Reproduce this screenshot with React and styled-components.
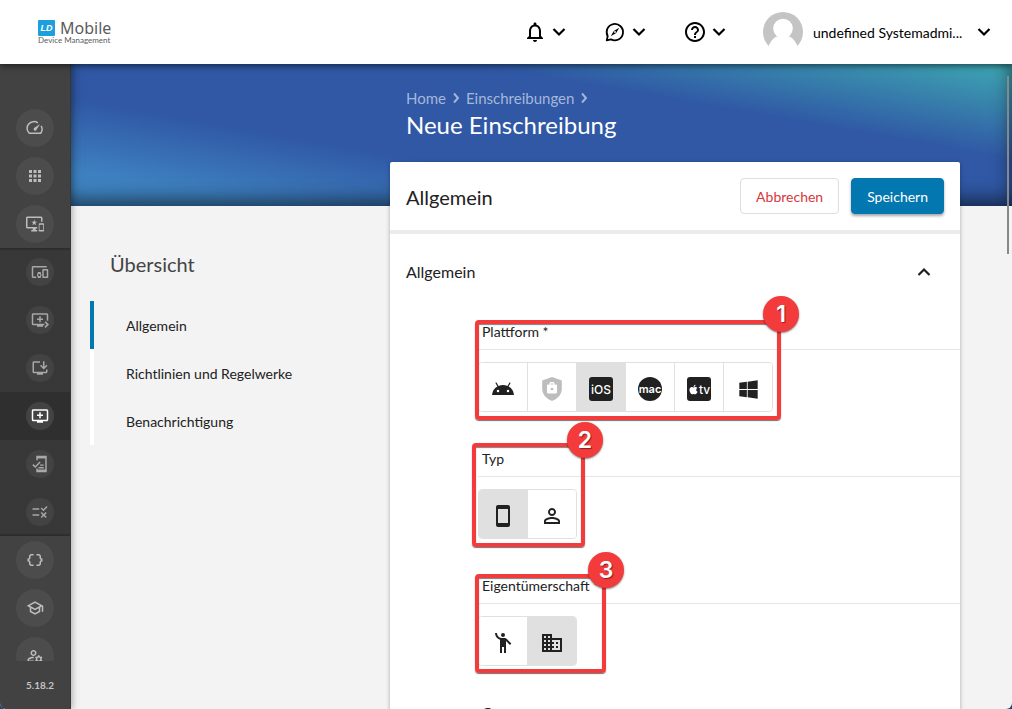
import { useState } from "react";
import styled, { createGlobalStyle } from "styled-components";
import { FaApple, FaWindows } from "react-icons/fa";
import {
  MdApps,
  MdDataObject,
  MdEmojiPeople,
  MdHelpOutline,
  MdOutlineAddToQueue,
  MdOutlineBusiness,
  MdOutlineDevicesOther,
  MdOutlineImportantDevices,
  MdOutlineInstallDesktop,
  MdOutlineManageAccounts,
  MdOutlineNotifications,
  MdOutlinePersonOutline,
  MdOutlineSchool,
  MdOutlineSmartphone,
  MdQueuePlayNext,
  MdRule,
} from "react-icons/md";

const GlobalStyle = createGlobalStyle`
  * {
    box-sizing: border-box;
  }

  body {
    margin: 0;
    background-color: #164674;
    color: #212121;
    font-family: Lato, "Noto Sans", sans-serif;
    font-size: 14px;
  }

  button {
    font: inherit;
    color: inherit;
    cursor: pointer;
  }
`;

const Page = styled.div`
  display: flex;
  flex-direction: column;
  height: 100vh;
  overflow: hidden;
  position: relative;
  border-radius: 0 0 6px 6px;
  background-color: #f3f3f3;
`;

const Header = styled.header`
  flex: none;
  display: flex;
  align-items: center;
  height: 64px;
  padding: 0 16px 0 38px;
  background-color: #fff;
  box-shadow: 0 2px 6px rgba(0, 0, 0, 0.5);
  z-index: 3;
`;

const Logo = styled.a`
  display: flex;
  flex-direction: column;
  margin-right: auto;
  color: #5c5c5c;
  text-decoration: none;
`;

const LogoTop = styled.span`
  display: flex;
  align-items: center;
  gap: 5px;
  height: 16px;
  font-family: "Noto Sans", sans-serif;
  font-size: 16px;
  line-height: 16px;
`;

const LogoSub = styled.span`
  font-size: 8px;
  line-height: 9px;
`;

const LogoMark = styled.span`
  display: flex;
  align-items: center;
  justify-content: center;
  width: 17px;
  height: 16px;
  border-radius: 1px;
  background-color: #1d9fdc;
  color: #fff;
  font-family: "Liberation Sans", sans-serif;
  font-size: 9px;
  font-style: italic;
  font-weight: bold;
`;

const HeaderActions = styled.div`
  display: flex;
  align-items: center;
  gap: 32px;
`;

const HeaderButton = styled.button`
  display: flex;
  align-items: center;
  padding: 0;
  border: none;
  background: none;
  color: #000;
`;

const UserName = styled.span`
  width: 169px;
  padding-left: 10px;
  text-align: left;
  white-space: nowrap;
`;

const Body = styled.div`
  flex: 1;
  display: flex;
  min-height: 0;
`;

const Sidebar = styled.aside`
  flex: none;
  display: flex;
  flex-direction: column;
  width: 71px;
  background-color: #424242;
  border-right: 1px solid #383838;
  box-shadow: 2px 0 6px rgba(0, 0, 0, 0.25);
  z-index: 2;
`;

const SideNav = styled.nav`
  flex: 1;
  min-height: 0;
  overflow: hidden;
  padding-top: 40px;
`;

const SubNav = styled.div`
  background: linear-gradient(#2a2a2a, #383838 3px, #383838 calc(100% - 3px), #2a2a2a);
`;

const SideItem = styled.a`
  display: flex;
  align-items: center;
  justify-content: flex-end;
  height: 48px;
  padding-right: 16px;
  background-color: ${({ $active }) => ($active ? "#2f2f2f" : "transparent")};
  color: ${({ $active, $small }) => ($active ? "#fff" : $small ? "#a8a8a8" : "#bdbdbd")};
`;

const SideCircle = styled.span`
  display: flex;
  align-items: center;
  justify-content: center;
  width: ${({ $small }) => ($small ? "28px" : "38px")};
  height: ${({ $small }) => ($small ? "28px" : "38px")};
  border-radius: 50%;
  background-color: ${({ $small }) => ($small ? "#434343" : "#4c4c4c")};
`;

const Version = styled.div`
  height: 48px;
  line-height: 48px;
  padding-left: 10px;
  text-align: center;
  font-size: 10px;
  font-weight: 700;
  color: #c4c4c4;
`;

const Main = styled.main`
  flex: 1;
  min-width: 0;
  overflow: hidden;
`;

const Banner = styled.div`
  height: 142px;
  padding: 26px 52px 0 335px;
  background: linear-gradient(10deg, #4088c6 0%, #3e80c0 12%, #3058a5 35%, #3058a5 69%, #3ea8b2 100%);
  box-shadow: inset -4px -10px 20px -4px rgba(0, 0, 0, 0.6);
  color: #fff;
`;

const Breadcrumb = styled.nav`
  display: flex;
  align-items: center;
  gap: 5px;
  height: 16px;
  font-size: 15px;
  color: #a5b7d9;

  a {
    color: inherit;
    text-decoration: none;
  }
`;

const Title = styled.h1`
  margin: 0;
  line-height: 38px;
  font-size: 24px;
  font-weight: 400;
`;

const Content = styled.div`
  display: grid;
  grid-template-columns: 300px minmax(0, 1fr);
  margin-top: -44px;
  padding: 0 52px 0 19px;
`;

const Overview = styled.aside`
  padding-top: 80px;
`;

const OverviewTitle = styled.h2`
  margin: 0 0 15px;
  padding-left: 20px;
  line-height: 44px;
  font-size: 20px;
  font-weight: 400;
  color: #444;
`;

const OverviewLink = styled.a`
  display: block;
  padding-left: 32px;
  border-left: 4px solid ${({ $active }) => ($active ? "#0277b0" : "#fff")};
  line-height: 50px;
  height: 48px;
  color: #212121;
  text-decoration: none;
`;

const Card = styled.section`
  position: relative;
  min-height: 600px;
  background-color: #fff;
  border-radius: 2px 2px 0 0;
  box-shadow: 0 1px 4px rgba(0, 0, 0, 0.3);
`;

const CardHeader = styled.div`
  display: flex;
  align-items: center;
  gap: 12px;
  height: 72px;
  padding: 0 16px;
  border-bottom: 4px solid #ebebeb;
`;

const CardTitle = styled.h2`
  flex: 1;
  margin: 0;
  padding-top: 2px;
  font-size: 20px;
  font-weight: 400;
`;

const Button = styled.button`
  height: 36px;
  padding: 0 15px;
  border: 1px solid ${({ $primary }) => ($primary ? "#0277b0" : "#dedede")};
  border-radius: 4px;
  background-color: ${({ $primary }) => ($primary ? "#0277b0" : "#fff")};
  color: ${({ $primary }) => ($primary ? "#fff" : "#d7373c")};
  box-shadow: ${({ $primary }) => ($primary ? "0 2px 3px rgba(0, 0, 0, 0.35)" : "none")};
`;

const SectionToggle = styled.button`
  display: flex;
  align-items: center;
  justify-content: space-between;
  width: 100%;
  height: 76px;
  padding: 0 24px 0 16px;
  border: none;
  background: none;
  font-size: 16px;

  span {
    padding-bottom: 2px;
  }
`;

const Form = styled.form`
  display: flex;
  flex-direction: column;
  gap: 25px;
  padding-left: 88px;
`;

const Field = styled.div`
  position: relative;
`;

const FieldLabel = styled.div`
  height: 40px;
  margin-bottom: 12px;
  padding: 5px 0 0 4px;
  border-bottom: 1px solid #e6e6e6;
  line-height: 34px;
`;

const ToggleGroup = styled.div`
  display: inline-flex;
  vertical-align: top;
  height: 50px;
  border: 1px solid #e0e0e0;
  border-radius: 4px;
  overflow: hidden;
`;

const Toggle = styled.button`
  display: flex;
  align-items: center;
  justify-content: center;
  width: 49px;
  padding: 4px 0 0;
  border: none;
  border-right: 1px solid #e0e0e0;
  background-color: ${({ $active }) => ($active ? "#e0e0e0" : "#fff")};

  &:last-child {
    width: 48px;
    border-right: none;
  }
`;

/* numbered marker that lies over a field */
const Marker = styled.div`
  position: absolute;
  top: ${({ $top }) => $top}px;
  left: ${({ $left }) => $left}px;
  width: ${({ $width }) => $width}px;
  height: ${({ $height }) => $height}px;
  border: 4px solid #f43b3c;
  border-radius: 4px;
  box-shadow: 0 1px 1px rgba(0, 0, 0, 0.55), inset 0 1px 1px rgba(0, 0, 0, 0.5);
  pointer-events: none;
`;

const MarkerBadge = styled.span`
  position: absolute;
  top: ${({ $top }) => $top}px;
  right: -22px;
  width: 36px;
  height: 36px;
  border-radius: 50%;
  background-color: #f43b3c;
  box-shadow: 0 1px 2px rgba(0, 0, 0, 0.5);
  color: #fff;
  font-family: Inter, sans-serif;
  font-size: 23px;
  font-weight: 600;
  line-height: 36px;
  text-align: center;
  text-shadow: 1px 1px 1px rgba(0, 0, 0, 0.45);
`;

const ScrollThumb = styled.div`
  position: absolute;
  top: 76px;
  right: 3px;
  width: 2px;
  height: 178px;
  background-color: #85898c;
  z-index: 1;
`;

const AppBadge = styled.span`
  display: flex;
  align-items: center;
  justify-content: center;
  width: 24px;
  height: 24px;
  border-radius: ${({ $round }) => ($round ? "50%" : "3px")};
  background-color: #212121;
  color: #fff;
  font-family: Inter, sans-serif;
  font-size: ${({ $round }) => ($round ? "11px" : "12px")};
  font-weight: ${({ $round }) => ($round ? 600 : 500)};
`;

const Chevron = ({ up, size = 24 }) => (
  <svg width={size} height={size} viewBox="0 0 24 24" fill="none" stroke="currentColor" strokeWidth="2.2">
    <path d={up ? "M6.5 15l5.5-5.5 5.5 5.5" : "M6.5 9l5.5 5.5L17.5 9"} />
  </svg>
);

const CrumbArrow = () => (
  <svg width="10" height="12" viewBox="0 0 10 12" fill="none" stroke="currentColor" strokeWidth="1.9">
    <path d="M3 1.5L7 6l-4 4.5" />
  </svg>
);

const GuideIcon = () => (
  <svg width="24" height="24" viewBox="0 0 24 24" fill="none" stroke="currentColor" strokeWidth="1.8">
    <path d="M4.7 16.2A8.2 8.2 0 1 1 8 19.4L3.7 20.4z" strokeLinejoin="round" />
    <path d="M16.2 7.8l-3 5.2-5.4 3.2 3-5.3z" fill="currentColor" stroke="none" />
    <circle cx="12" cy="12" r="0.9" fill="#fff" stroke="none" />
  </svg>
);

const GaugeIcon = () => (
  <svg width="18" height="18" viewBox="0 0 24 24" fill="none" stroke="currentColor" strokeWidth="2">
    <path d="M15.8 5.2A9 9 0 0 0 4.3 19h15.4a9 9 0 0 0 .4-9.9" />
    <path d="M18.8 6.8l-5.2 8.1a2 2 0 1 1-2.9-2.8z" fill="currentColor" stroke="none" />
  </svg>
);

const PhoneCheckIcon = () => (
  <svg width="18" height="18" viewBox="0 0 24 24" fill="none" stroke="currentColor" strokeWidth="2">
    <path d="M8 7V2h12v20H8v-4" />
    <path d="M8 3.5h12M8 20.5h12" strokeWidth="2.5" />
    <path d="M2.5 12.8l3.2 3.2 6.5-6.8" />
    <path d="M12 13.5h5M10 17h7" strokeWidth="1.7" />
  </svg>
);

const AndroidIcon = () => (
  <svg width="24" height="24" viewBox="0 0 24 24" fill="#212121">
    <path d="M17.6 9.48l1.84-3.18c.16-.31.04-.69-.26-.85-.29-.15-.65-.06-.83.22l-1.88 3.24a11.46 11.46 0 0 0-8.94 0L5.65 5.67c-.19-.29-.58-.38-.87-.2-.28.18-.37.54-.22.83L6.4 9.48A10.78 10.78 0 0 0 1 18h22a10.78 10.78 0 0 0-5.4-8.52zM7 15.25a1.25 1.25 0 1 1 0-2.5 1.25 1.25 0 0 1 0 2.5zm10 0a1.25 1.25 0 1 1 0-2.5 1.25 1.25 0 0 1 0 2.5z" />
  </svg>
);

const WorkShieldIcon = () => (
  <svg width="24" height="24" viewBox="0 0 24 24" fill="#bdbdbd">
    <path d="M12 0L2.2 3.6v8.2c0 5.6 4 10 9.8 12.2 5.8-2.2 9.8-6.600 9.8-12.2V3.6z" />
    <path
      fill="#fff"
      d="M9.5 6.5v1H8.200c-.7 0-1.200.5-1.200 1.200v6.600c0 .7.5 1.200 1.200 1.200h7.600c.7 0 1.200-.5 1.200-1.200V8.700c0-.7-.5-1.200-1.200-1.200h-1.300v-1c0-.8-.6-1.400-1.400-1.400h-2.200c-.8 0-1.400.6-1.400 1.400zm1.300 1v-1.100h2.400v1.100z"
    />
    <circle cx="12" cy="12" r="1.3" />
  </svg>
);

const Avatar = () => (
  <svg width="40" height="40" viewBox="0 0 40 40">
    <circle cx="20" cy="20" r="20" fill="#c4c4c4" />
    <circle cx="20" cy="16.5" r="9.8" fill="#fff" />
    <path d="M5.500 34.200C8 28 12.500 24 16 24h8c3.500 0 8 4 10.500 10.200L34 40H6z" fill="#fff" />
  </svg>
);

const mainItems = [
  { label: "Dashboard", icon: <GaugeIcon /> },
  { label: "Apps", icon: <MdApps size={18} /> },
  { label: "Geräteverwaltung", icon: <MdOutlineImportantDevices size={18} /> },
];

const subItems = [
  { label: "Geräte", icon: <MdOutlineDevicesOther size={18} /> },
  { label: "Zuweisen", icon: <MdQueuePlayNext size={18} /> },
  { label: "Installieren", icon: <MdOutlineInstallDesktop size={18} /> },
  { label: "Einschreibungen", icon: <MdOutlineAddToQueue size={18} />, active: true },
  { label: "Aufgaben", icon: <PhoneCheckIcon /> },
  { label: "Regeln", icon: <MdRule size={18} /> },
];

const bottomItems = [
  { label: "Variablen", icon: <MdDataObject size={18} /> },
  { label: "Schule", icon: <MdOutlineSchool size={18} /> },
  { label: "Benutzer", icon: <MdOutlineManageAccounts size={18} /> },
];

const fields = [
  {
    name: "platform",
    label: "Plattform *",
    marker: { top: 10, left: -3, width: 306, height: 100, badgeTop: -28 },
    options: [
      { value: "Android", icon: <AndroidIcon /> },
      { value: "Android Enterprise", icon: <WorkShieldIcon /> },
      { value: "iOS", icon: <AppBadge>iOS</AppBadge> },
      { value: "macOS", icon: <AppBadge $round>mac</AppBadge> },
      {
        value: "tvOS",
        icon: (
          <AppBadge>
            <FaApple size={11} />
            tv
          </AppBadge>
        ),
      },
      { value: "Windows", icon: <FaWindows size={21} /> },
    ],
  },
  {
    name: "type",
    label: "Typ",
    marker: { top: 6, left: -6, width: 113, height: 104, badgeTop: -25 },
    options: [
      { value: "Gerät", icon: <MdOutlineSmartphone size={24} /> },
      { value: "Person", icon: <MdOutlinePersonOutline size={24} /> },
    ],
  },
  {
    name: "ownership",
    label: "Eigentümerschaft *",
    marker: { top: 10, left: -3, width: 131, height: 99, badgeTop: -26 },
    options: [
      { value: "Privat", icon: <MdEmojiPeople size={24} /> },
      { value: "Firma", icon: <MdOutlineBusiness size={24} /> },
    ],
  },
];

const SideLinks = ({ items, small }) =>
  items.map((item) => (
    <SideItem key={item.label} href="#" aria-label={item.label} $small={small} $active={item.active}>
      <SideCircle $small={small}>{item.icon}</SideCircle>
    </SideItem>
  ));

const App = () => {
  const [open, setOpen] = useState(true);
  const [values, setValues] = useState({ platform: "iOS", type: "Gerät", ownership: "Firma" });

  return (
    <>
      <GlobalStyle />
      <Page>
        <Header>
          <Logo href="#">
            <LogoTop>
              <LogoMark>LD</LogoMark>
              Mobile
            </LogoTop>
            <LogoSub>Device Management</LogoSub>
          </Logo>
          <HeaderActions>
            <HeaderButton aria-label="Benachrichtigungen">
              <MdOutlineNotifications size={24} />
              <Chevron />
            </HeaderButton>
            <HeaderButton aria-label="Anleitungen">
              <GuideIcon />
              <Chevron />
            </HeaderButton>
            <HeaderButton aria-label="Hilfe">
              <MdHelpOutline size={24} />
              <Chevron />
            </HeaderButton>
            <HeaderButton>
              <Avatar />
              <UserName>undefined Systemadmi...</UserName>
              <Chevron />
            </HeaderButton>
          </HeaderActions>
        </Header>

        <Body>
          <Sidebar>
            <SideNav>
              <SideLinks items={mainItems} />
              <SubNav>
                <SideLinks items={subItems} small />
              </SubNav>
              <SideLinks items={bottomItems} />
            </SideNav>
            <Version>5.18.2</Version>
          </Sidebar>

          <Main>
            <Banner>
              <Breadcrumb>
                <a href="#">Home</a>
                <CrumbArrow />
                <a href="#">Einschreibungen</a>
                <CrumbArrow />
              </Breadcrumb>
              <Title>Neue Einschreibung</Title>
            </Banner>

            <Content>
              <Overview>
                <OverviewTitle>Übersicht</OverviewTitle>
                <OverviewLink href="#" $active>
                  Allgemein
                </OverviewLink>
                <OverviewLink href="#">Richtlinien und Regelwerke</OverviewLink>
                <OverviewLink href="#">Benachrichtigung</OverviewLink>
              </Overview>

              <Card>
                <CardHeader>
                  <CardTitle>Allgemein</CardTitle>
                  <Button>Abbrechen</Button>
                  <Button $primary>Speichern</Button>
                </CardHeader>
                <SectionToggle aria-expanded={open} onClick={() => setOpen(!open)}>
                  <span>Allgemein</span>
                  <Chevron up={open} />
                </SectionToggle>
                {open && (
                  <Form>
                    {fields.map((field, i) => (
                      <Field key={field.name}>
                        <FieldLabel id={field.name}>{field.label}</FieldLabel>
                        <ToggleGroup role="group" aria-labelledby={field.name}>
                          {field.options.map((option) => (
                            <Toggle
                              key={option.value}
                              type="button"
                              aria-label={option.value}
                              aria-pressed={values[field.name] === option.value}
                              $active={values[field.name] === option.value}
                              onClick={() => setValues({ ...values, [field.name]: option.value })}
                            >
                              {option.icon}
                            </Toggle>
                          ))}
                        </ToggleGroup>
                        <Marker
                          $top={field.marker.top}
                          $left={field.marker.left}
                          $width={field.marker.width}
                          $height={field.marker.height}
                        >
                          <MarkerBadge $top={field.marker.badgeTop}>{i + 1}</MarkerBadge>
                        </Marker>
                      </Field>
                    ))}
                    <FieldLabel>Gruppe</FieldLabel>
                  </Form>
                )}
              </Card>
            </Content>
          </Main>
        </Body>
        <ScrollThumb />
      </Page>
    </>
  );
};

export default App;
